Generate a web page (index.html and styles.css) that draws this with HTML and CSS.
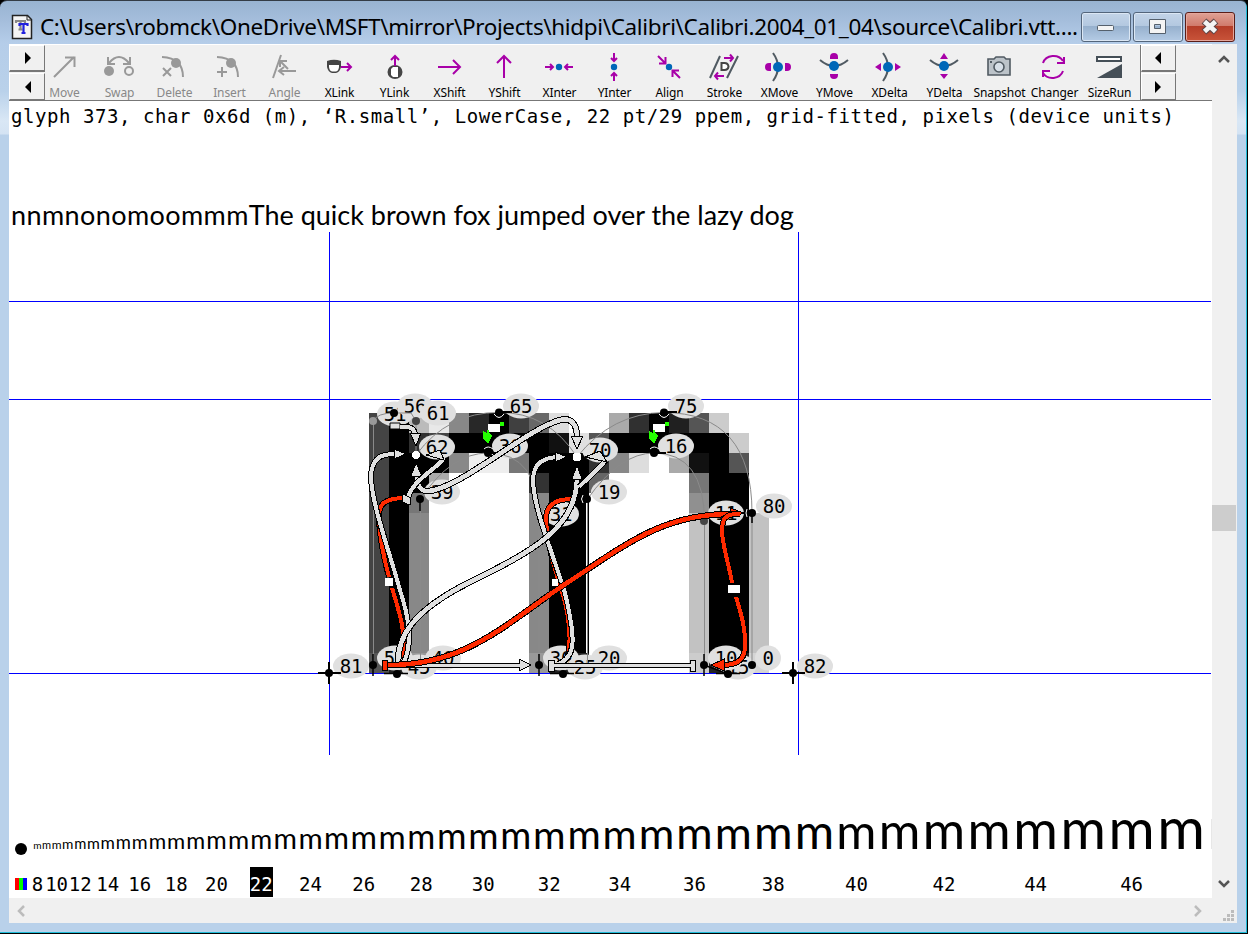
FILE: index.html
```html
<!DOCTYPE html>
<html lang="en">
<head>
<meta charset="utf-8">
<title>Calibri.vtt</title>
<link rel="stylesheet" href="styles.css">
</head>
<body>
<div class="window">
  <header class="titlebar">
    <svg class="app-icon" width="22" height="26" viewBox="11 13 22 26"><path d="M12.500 14.500h15l4 4v19h-19z" fill="#f4f4f4" stroke="#222" stroke-width="1.500"/><path d="M27 15v4h5" fill="none" stroke="#222"/><path d="M16 22v-2h9v2M20.500 20v8M18.500 28.500h4" stroke="#888" stroke-width="2.200" fill="none"/><path d="M19.500 25v-2h8v2M23.500 23v9M21.500 32h4" stroke="#2222dd" stroke-width="2.200" fill="none"/></svg>
    <h1 class="title">C:\Users\robmck\OneDrive\MSFT\mirror\Projects\hidpi\Calibri\Calibri.2004_01_04\source\Calibri.vtt....</h1>
    <div class="caption-buttons">
      <button class="cap" aria-label="Minimize"><svg width="48" height="28"><rect x="15.500" y="12.500" width="16" height="5" rx="1" fill="#f4f4f4" stroke="#55606c"/></svg></button>
      <button class="cap" aria-label="Maximize"><svg width="48" height="28"><path d="M15.500 6.500h16v14h-16zM20.500 11.500v4h6v-4z" fill="#f4f4f4" fill-rule="evenodd" stroke="#55606c"/></svg></button>
      <button class="cap close" aria-label="Close"><svg width="48" height="28"><path d="M18 8l12 11M30 8l-12 11" stroke="#5b4547" stroke-width="7"/><path d="M18.500 8.500l11 10M29.500 8.500l-11 10" stroke="#f4f4f4" stroke-width="4.800"/></svg></button>
    </div>
  </header>
  <div class="client">
    <main class="view">
      <nav class="toolbar">
        <div class="pager left"><button aria-label="Next"><svg width="8" height="12"><path d="M1 0l6 6-6 6z"/></svg></button><button aria-label="Previous"><svg width="8" height="12"><path d="M7 0l-6 6 6 6z"/></svg></button></div>
        <div class="tools">
          <div class="tool off"><svg viewBox="44 47 40 36"><path class="g" d="M54 77L74 57M65 57.500h9.500V67"/></svg><span>Move</span></div>
          <div class="tool off"><svg viewBox="99 47 40 36"><circle cx="109" cy="71" r="5" fill="#999"/><circle class="g" cx="129" cy="71" r="4"/><path class="g" d="M109 63Q119 51 129 63M108 57v7h7M130 57v7h-7"/></svg><span>Swap</span></div>
          <div class="tool off"><svg viewBox="154 47 40 36"><path class="g" d="M162 57Q183 58 183 77M163 68l8 8M171 68l-8 8"/><circle cx="176" cy="63" r="5" fill="#999"/></svg><span>Delete</span></div>
          <div class="tool off"><svg viewBox="209 47 40 36"><path class="g" d="M217 57Q238 58 238 77M222 67v10M217 72h10"/><circle cx="231" cy="63" r="5" fill="#999"/></svg><span>Insert</span></div>
          <div class="tool off"><svg viewBox="264 47 40 36"><path class="g" d="M281 55L273 78M296 71H279M284 67l-5 4 5 4M288 69L281 62M280 67v-6h7"/></svg><span>Angle</span></div>
          <div class="tool"><svg viewBox="319 47 40 36"><path d="M327 61q7-2.500 14 0v6q-1 5-5 6h-4q-4-1-5-6z" fill="#454545"/><path d="M329 65h10v2q-.5 4-3 4.500h-4q-2.500-.5-3-4.500z" fill="#fff"/><path class="p" d="M341 67h9M347 63l4 4-4 4"/></svg><span>XLink</span></div>
          <div class="tool"><svg viewBox="374 47 40 36"><ellipse cx="395" cy="72" rx="7.500" ry="7" fill="#454545"/><path d="M393 67h5v10h-5l-2-2v-6z" fill="#fff"/><path class="p" d="M395 66V56M391 60l4-4 4 4"/></svg><span>YLink</span></div>
          <div class="tool"><svg viewBox="429 47 40 36"><path class="p" d="M438 67h22M453 60l7 7-7 7"/></svg><span>XShift</span></div>
          <div class="tool"><svg viewBox="484 47 40 36"><path class="p" d="M504 78V56M497 63l7-7 7 7"/></svg><span>YShift</span></div>
          <div class="tool"><svg viewBox="539 47 40 36"><path class="p" d="M545 67h8M550 64l3 3-3 3M573 67h-8M568 64l-3 3 3 3"/><circle class="b" cx="559" cy="67" r="3.200"/></svg><span>XInter</span></div>
          <div class="tool"><svg viewBox="594 47 40 36"><path class="p" d="M614 53v8M611 58l3 3 3-3M614 81v-8M611 76l3-3 3 3"/><circle class="b" cx="614" cy="67" r="3.200"/></svg><span>YInter</span></div>
          <div class="tool"><svg viewBox="649 47 40 36"><path class="p" d="M658 56l7 7M665.500 57v6.500H659M680 78l-7-7M672.500 77v-6.500H679"/><circle class="b" cx="669" cy="67" r="3.200"/></svg><span>Align</span></div>
          <div class="tool"><svg viewBox="704 47 40 36"><path class="d" d="M720 56L710 78M738 56L727 78"/><path d="M721.500 63v7h3q3.500 0 4-3.500-.5-3.500-4-3.500z" fill="#fff" stroke="#454545" stroke-width="2"/><path class="p" d="M724 58h9M730 54.500l3 3.500-3 3.500M724 76h-9M718 72.500l-3 3.500 3 3.500"/></svg><span>Stroke</span></div>
          <div class="tool"><svg viewBox="759 47 40 36"><path class="d" d="M773 53Q783 67 773 81"/><path class="v" d="M771 63v8h-2q-4 0-4-4t4-4zM785 63v8h2q4 0 4-4t-4-4z"/><circle class="b" cx="778" cy="67" r="5"/></svg><span>XMove</span></div>
          <div class="tool"><svg viewBox="814 47 40 36"><path class="d" d="M820 60Q834 72 848 60"/><path class="v" d="M830 59v-2q0-4 4-4t4 4v2zM830 74v1q0 4 4 4t4-4v-1z"/><circle class="b" cx="834" cy="66" r="5"/></svg><span>YMove</span></div>
          <div class="tool"><svg viewBox="869 47 40 36"><path class="d" d="M883 53Q893 67 883 81"/><path class="v" d="M875 67l6-4v8zM901 67l-6-4v8z"/><circle class="b" cx="888" cy="67" r="5"/></svg><span>XDelta</span></div>
          <div class="tool"><svg viewBox="924 47 40 36"><path class="d" d="M930 60Q944 72 958 60"/><path class="v" d="M944 53l-4 6h8zM944 79l-4-5h8z"/><circle class="b" cx="944" cy="66" r="5"/></svg><span>YDelta</span></div>
          <div class="tool"><svg viewBox="979 47 40 36"><path d="M988 59h6l2-2h8l2 2h4v16h-22z" fill="#bcc3c9" stroke="#505a62" stroke-width="1.600"/><circle cx="999" cy="67" r="5" fill="#d7dfe7" stroke="#505a62" stroke-width="1.600"/><path d="M990 61h2v2h-2z" fill="#505a62"/></svg><span>Snapshot</span></div>
          <div class="tool"><svg viewBox="1034 47 40 36"><path class="p" d="M1043 63a11 10 0 0 1 20-2M1064 57v6h-7M1063 71a11 10 0 0 1-20 2M1043 77v-6h7"/></svg><span>Changer</span></div>
          <div class="tool"><svg viewBox="1089 47 40 36"><path d="M1097 57h24v4h-24z" fill="#fff" stroke="#454f57" stroke-width="2"/><path d="M1097 78h25V64z" fill="#454f57"/></svg><span>SizeRun</span></div>
        </div>
        <div class="pager right"><button aria-label="Previous"><svg width="8" height="12"><path d="M7 0l-6 6 6 6z"/></svg></button><button aria-label="Next"><svg width="8" height="12"><path d="M1 0l6 6-6 6z"/></svg></button></div>
      </nav>
      <p class="status">glyph 373, char 0x6d (m), ‘R.small’, LowerCase, 22 pt/29 ppem, grid-fitted, pixels (device units)</p>
      <p class="sample"><span class="test">nnmnonomoommm</span>The quick brown fox jumped over the lazy dog</p>
      <svg class="glyph" width="1203" height="533" viewBox="9 232 1203 533">
        <g id="pixels" shape-rendering="crispEdges"></g>
        <path class="guide" d="M9 301.500H1211M9 399.500H1211M9 673.500H1211M329.500 232V755M798.500 232V755"/>
        <g id="labels"></g>
        <path class="outline" d="M373.500 665V421Q377 413 394 413H411L416 421V455Q448 412 499 412.500Q548 412 577 457Q612 413 664 412.500Q752 413 752 513V665M420.500 665V499Q451 453 488 453Q539 453 539 521V665M587.500 665V499Q620 453 654 453Q704 453 704.500 521V665"/>
        <path d="M586.500 499V653" stroke="#fff" shape-rendering="crispEdges"/>
        <g id="points"></g>
        <path class="o" d="M390 423h10v6h-10z"/>
        <g id="links" shape-rendering="crispEdges"></g>
      </svg>
      <div class="run"><svg class="dot" width="12" height="12"><circle cx="6" cy="6" r="6"/></svg><div id="run" class="run-items letters"></div></div>
      <div class="run labels-row"><span class="rgb"></span><div id="sizes" class="run-items"></div></div>
    </main>
    <aside class="vscroll"><svg width="12" height="8"><path d="M1 7l5-5 5 5" stroke="#555" stroke-width="2.500" fill="none"/></svg><div class="thumb"></div><svg width="12" height="8"><path d="M1 1l5 5 5-5" stroke="#555" stroke-width="2.500" fill="none"/></svg></aside>
    <footer class="hscroll"><svg width="10" height="12"><path d="M8 1L3 6l5 5" stroke="#bcbcbc" stroke-width="2.500" fill="none"/></svg><svg width="10" height="12"><path d="M2 1l5 5-5 5" stroke="#bcbcbc" stroke-width="2.500" fill="none"/></svg></footer>
    <div class="grip"><svg width="12" height="12" fill="#bcbcbc"><path d="M8 0h3v3H8zM4 4h3v3H4zM8 4h3v3H8zM0 8h3v3H0zM4 8h3v3H4zM8 8h3v3H8z"/></svg></div>
  </div>
</div>
<script src="main.js"></script>
</body>
</html>
```
FILE: styles.css
```css
* { box-sizing: border-box; }
body { margin: 0; background: #000; overflow: hidden; }
h1, p { margin: 0; font-weight: 400; white-space: pre; }
button { padding: 0; margin: 0; border: 0; display: flex; align-items: center; justify-content: center; }
svg { display: block; flex: none; }
.window {
  width: 1248px; height: 934px; display: flex; flex-direction: column;
  border-top: 1px solid #333c46; border-bottom: 1px solid #000; border-right: 1px solid #000;
  border-radius: 7px 7px 0 0; box-shadow: inset -1px -1px 0 #20bcd8;
  background: linear-gradient(#98b4d2 0, #a5bedc 20px, #b5cde9 42px, #b9d1ea 90px, #d9e7f5 120px, #d4e3f3 133px, #b9d1ea 134px);
}
.titlebar { height: 43px; display: flex; align-items: center; padding: 8px 11px 0 11px; }
.title {
  width: 1041px; margin: 1px 0 0 7px; flex: none;
  font: 400 22.500px/34px "Noto Sans", "Open Sans", sans-serif; letter-spacing: -0.360px; color: #000;
}
.caption-buttons { display: flex; gap: 2px; margin-top: 0; }
.cap {
  width: 50px; height: 30px; border: 1px solid #53657b; border-radius: 3px;
  box-shadow: inset 0 0 0 1px #dbe7f4;
  background: linear-gradient(#c3d4e8 0, #b3c8e0 46%, #96b0cd 47%, #b4cbe5 100%);
}
.close { border-color: #5a1d18; box-shadow: inset 0 0 0 1px #e5a79c; background: linear-gradient(#dfa195 0, #d07a6b 46%, #b43d28 47%, #c9543a 100%); }
.client { height: 879px; margin: 0 10px 0 9px; display: grid; grid-template: 854px 25px / 1203px 25px; background: #f0f0f0; }
.view { background: #fff; overflow: hidden; display: flex; flex-direction: column; }
.toolbar { height: 57px; flex: none; display: flex; background: #f0f0f0; border-top: 1px solid #fff; border-bottom: 1px solid #777; }
.pager { width: 36px; flex: none; display: flex; flex-direction: column; gap: 1px; }
.pager button { flex: 1; background: #f0f0f0; border-style: solid; border-width: 1px 1px 2px 1px; border-color: #fff #777 #777 #fff; }
.pager button + button { border-bottom-width: 1px; padding-top: 1px; }
.pager.left svg { margin-left: 2px; }
.pager.right { border-left: 1px solid #777; }
.pager.right svg { margin-right: 2px; }
.tools { display: flex; width: 1095px; flex: none; }
.tool { width: 55px; flex: none; display: flex; flex-direction: column; align-items: center; }
.tool:first-child { margin-left: -8px; }
.tool svg { width: 40px; height: 36px; margin: 2px 1px 0 0; }
.tool span { font: 12px/15px "Noto Sans", "Open Sans", sans-serif; margin-top: 2px; letter-spacing: -0.1px; color: #000; white-space: nowrap; }
.tool.off span { color: #888; }
.g, .p, .d { fill: none; stroke: #999; stroke-width: 2; }
.p { stroke: #a800a8; }
.d { stroke: #505a62; }
.b { fill: #0067b8; }
.v { fill: #a800a8; }
.status { font: 19px/30px "DejaVu Sans Mono", monospace; letter-spacing: 0.555px; padding-left: 2px; height: 31px; flex: none; }
.sample { height: 100px; flex: none; padding: 67px 0 0 2px; font: 27px/32px Lato, "Open Sans", sans-serif; letter-spacing: -0.010px; }
.test { letter-spacing: 0.400px; }
.glyph { flex: none; }
.guide { stroke: #0000ff; fill: none; shape-rendering: crispEdges; }
.outline { stroke: #8a8a8a; fill: none; stroke-width: 1; }
.bubble { fill: #e0e0e0; }
.num { font: 19px "DejaVu Sans Mono", monospace; text-anchor: middle; letter-spacing: -0.3px; }
.k { fill: none; stroke: #000; }
.o { fill: #e0e0e0; stroke: #000; stroke-width: 1; }
.run { height: 95px; flex: none; display: flex; padding-left: 6px; width: 1203px; overflow: hidden; }
.run .dot { margin-top: 78px; }
.run-items { display: flex; margin-left: 6px; }
.letters { align-items: baseline; padding-top: 27px; }
.m { flex: none; line-height: 66px; height: 66px; font-family: Lato, "Open Sans", sans-serif; text-align: center; white-space: nowrap; color: #000; padding-top: 2px; }
.labels-row { height: 38px; }
.rgb { width: 12px; height: 12px; flex: none; margin-top: 18px; background: linear-gradient(90deg, #f00 33.300%, #0f0 33.300% 66.600%, #00f 66.600%); }
.size { flex: none; display: flex; justify-content: center; }
.size span { font: 19px/30px "DejaVu Sans Mono", monospace; letter-spacing: 0; height: 30px; margin-top: 7px; padding-top: 2px; }
.size.on span { background: #000; color: #fff; }
.vscroll { display: flex; flex-direction: column; align-items: center; padding: 11px 1px 10px 0; background: #f0f0f0; }
.vscroll .thumb { width: 24px; height: 26px; background: #cdcdcd; margin: 442px 0 auto; }
.hscroll { display: flex; align-items: center; justify-content: space-between; padding: 0 9px 0 7px; }
.grip { display: flex; align-items: flex-end; justify-content: flex-end; padding: 0 2px 1px 0; }
```
FILE: main.js
```javascript
const make = (parent, html) => document.getElementById(parent).insertAdjacentHTML("beforeend", html);

// Grid-fitted bitmap: one entry per 20px cell from x=369, two hex digits of gray each.
const stem = "44 00 88 -- -- -- -- -- 88 00 00 -- -- -- -- -- c2 00 00 c2";
const rows = [
  "44 00 bb e8 88 28 00 40 68 dd -- -- aa 30 00 20 55 cc -- --",
  "44 00 30 44 00 00 00 00 00 11 e0 55 00 00 00 00 00 00 cc --",
  "44 00 00 00 88 ee ee 77 00 00 00 33 88 dd -- aa 11 00 55 --",
  "44 00 00 aa -- -- -- -- 33 00 00 66 -- -- -- -- 77 00 00 --",
  "44 00 77 -- -- -- -- -- 88 00 00 -- -- -- -- -- 90 00 00 --",
  stem, stem, stem, stem, stem, stem, stem,
  "55 22 99 -- -- -- -- -- 99 22 22 -- -- -- -- -- cc 22 22 d4"
];
rows.forEach((row, r) => row.split(" ").forEach((v, c) => {
  if (v !== "--") make("pixels", `<rect x="${369 + c * 20}" y="${413 + r * 20}" width="20" height="20" fill="#${v}${v}${v}"/>`);
}));

// Point numbers
[["51",395,414],["56",415,406],["61",438,413],["62",437,447],["65",521,406],["36",510,446],["39",442,492],
 ["31",561,514],["75",686,406],["70",600,450],["16",676,446],["19",609,492],["11",726,513],["80",774,506],
 ["50",395,658],["40",443,658],["45",419,667],["30",561,658],["20",609,658],["25",585,667],
 ["15",738,667],["10",726,658],["0",768,658],["81",351,666],["82",815,666]
].forEach(([t, x, y]) => make("labels",
  `<ellipse class="bubble" cx="${x}" cy="${y}" rx="${t.length > 1 ? 18 : 13}" ry="12.500"/><text class="num" x="${x}" y="${y + 7}">${t}</text>`));

// Control points with their tick marks
[[394,413],[499,412.5],[488,453],[420,499],[373,665],[397,674],[539,665],[563,674],[587,499],[664,412.5],[654,453],
 [752,513],[704,665],[728,674],[752,665],[329,673],[793,673],[416,421,"#444"],[373,421,"#999"],[704,521,"#444"]
].forEach(([x, y, f]) => make("points", `<circle cx="${x}" cy="${y}" r="4" fill="${f || "#000"}"/>`));
make("points", `<path class="k" stroke-width="1.500" d="M373 654v22M539 654v22M704 654v22M384 673.500h24M550 673.500h24M716 673.500h24M420 499v12M752 513v10M704 665l24 9"/>
<path class="k" stroke-width="2" d="M318 673h23M329 662v22M782 673h23M793 662v22M500 412h12M488 453h12M665 412h12M654 453h12"/>
<path d="M494 414q5 7 10 0M484 449q4-4 9 0M659 414q5 7 10 0M650 449q4-4 9 0M583 495q-3 4 0 8M747 509q-2 4 0 8" fill="none" stroke="#fff"/>`);

// Links: dark casing below a coloured core
const link = (d, color, w) => make("links",
  `<path d="${d}" fill="none" stroke="#000" stroke-width="${w + 2}"/><path d="${d}" fill="none" stroke="${color}" stroke-width="${w}"/>`);
const head = (d, color) => make("links", `<path d="${d}" fill="${color}" stroke="#000"/>`);
const R = "#ff2a00", W = "#e0e0e0";
link("M406 498C388 498 379 502 379 515C379 535 385 562 389 577", R, 4);
link("M392 588C399 612 407 632 402 658", R, 4);
link("M572 499C555 499 546 505 546 519C547 545 556 573 563 595C570 620 571 640 568 657", R, 4);
link("M404 662C413 642 409 617 399 587C391 556 370 500 371 474C373 456 383 454 396 454", W, 4);
head("M394 449l12 5-12 5z", W);
link("M558 664C577 657 575 637 566 597C557 563 533 510 533 479C534 464 542 458 557 457", W, 4);
head("M555 452l12 5-12 5z", W);
link("M398 662C398 638 410 612 470 582C531 552 577 528 577 478", W, 4.5);
head("M572 479l5-14 5 14z", W);
link("M417 475C417 490 423 494 438 489C474 477 528 429 560 420C571 417 577 424 577 437", W, 4.5);
head("M411 476l5-13 6 13z", W);
head("M571 436h12l-6 13z", W);
link("M400 427C410 426 415 428 415 436", W, 4);
head("M410 433h11l-5 13z", W);
link("M444 458C437 469 409 482 408 500", W, 4);
link("M605 461C598 470 588 478 579 487", W, 4);
make("links", `<path class="o" d="M444 460L426 455l14-5zM607 462L585 457l15-6zM403 494l8 4-1 7-8-3z"/>
<path class="o" d="M390 663h129v-4l12 6-12 6v-4H390zM548 660h6v3h136v-3h5v11h-5v-4H554v4h-6z"/>`);
link("M384 665C470 667 511 618 573 579C629 542 665 514 731 514", R, 4.5);
make("links", `<path d="M382 660h5v10h-5z" fill="${R}" stroke="#000"/>`);
head("M730 508l14 5-14 5z", R);
link("M740 514C724 513 722 520 722 532C723 548 730 569 732 583", R, 4);
link("M736 597C741 613 746 630 745 648C744 661 736 665 722 665", R, 4);
head("M711 665l13-6v12z", R);
make("links", `<path d="M385 578h8v8h-8zM552 579h6v7h-6zM728 585h12v8h-12zM488 424h12v8h-12zM653 424h12v8h-12z" fill="#fff"/>
<path d="M500 422h4v4h-4zM483 431l4 2v-3h2v3l3 3-4 8-5-5zM665 422h4v4h-4zM649 431l4 2v-3h2v3l3 3-4 8-5-5z" fill="#24ff00"/>
<circle cx="416" cy="455" r="4" fill="#fff"/><circle cx="577" cy="457" r="4.500" fill="#fff"/>`);

// Size run: one letter per point size, a caption for every even size
for (let pt = 8; pt <= 48; pt++) {
  const ppem = Math.round(pt * 4 / 3), w = ppem * 0.8;
  make("run", `<div class="m" style="width:${w}px;font-size:${ppem * 0.92}px">m</div>`);
  const label = pt % 2 === 0 && pt < 48 ? `<span>${pt}</span>` : "";
  make("sizes", `<div class="size${pt === 22 ? " on" : ""}" style="width:${w}px">${label}</div>`);
}
```
